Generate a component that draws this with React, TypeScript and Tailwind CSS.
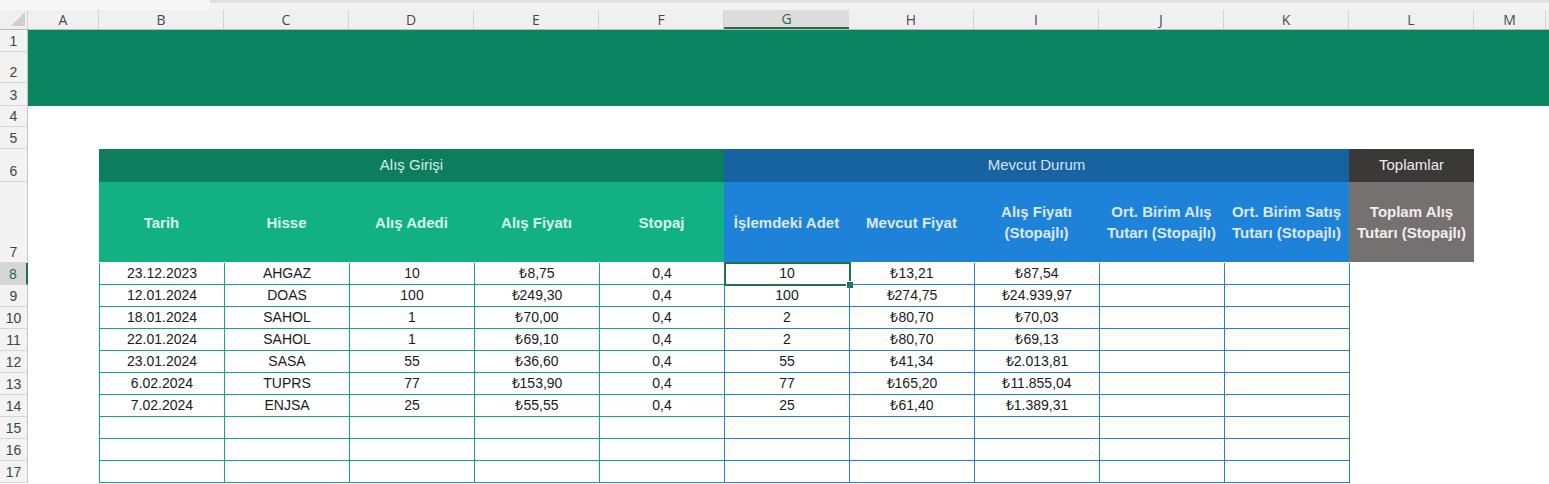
import React from "react";

const cols = ["B", "C", "D", "E", "F", "G", "H", "I", "J", "K", "L"];

const rows = [
  ["23.12.2023", "AHGAZ", "10", "₺8,75", "0,4", "10", "₺13,21", "₺87,54"],
  ["12.01.2024", "DOAS", "100", "₺249,30", "0,4", "100", "₺274,75", "₺24.939,97"],
  ["18.01.2024", "SAHOL", "1", "₺70,00", "0,4", "2", "₺80,70", "₺70,03"],
  ["22.01.2024", "SAHOL", "1", "₺69,10", "0,4", "2", "₺80,70", "₺69,13"],
  ["23.01.2024", "SASA", "55", "₺36,60", "0,4", "55", "₺41,34", "₺2.013,81"],
  ["6.02.2024", "TUPRS", "77", "₺153,90", "0,4", "77", "₺165,20", "₺11.855,04"],
  ["7.02.2024", "ENJSA", "25", "₺55,55", "0,4", "25", "₺61,40", "₺1.389,31"],
  ["", "", "", "", "", "", "", ""],
  ["", "", "", "", "", "", "", ""],
  ["", "", "", "", "", "", "", ""],
];

const greenHeads = ["Tarih", "Hisse", "Alış Adedi", "Alış Fiyatı", "Stopaj"];
const blueHeads = [
  ["İşlemdeki Adet"],
  ["Mevcut Fiyat"],
  ["Alış Fiyatı", "(Stopajlı)"],
  ["Ort. Birim Alış", "Tutarı (Stopajlı)"],
  ["Ort. Birim Satış", "Tutarı (Stopajlı)"],
];

const RowHead = ({ n, h, active }: { n: number; h: string; active?: boolean }) => (
  <div
    className={`w-[28px] shrink-0 flex items-end justify-center pb-[1px] border-b border-[#d6d6d6] text-[14px] leading-[18px] ${h} ${
      active
        ? "bg-[#d6d6d6] text-[#217346] border-r-2 border-r-[#217346]"
        : "bg-[#f3f3f3] text-[#444] border-r border-r-[#c4c4c4]"
    }`}
  >
    {n}
  </div>
);

export default function App() {
  return (
    <div className="w-[1549px] h-[484px] overflow-hidden bg-white font-['Liberation_Sans',sans-serif]">
      {/* top strip */}
      <div className="flex h-[10px]">
        <div className="w-[210px] bg-[#f7f7f7]" />
        <div className="flex-1 bg-[#f2f2f2] border-t-[3px] border-[#e0e0e0]" />
      </div>

      {/* column letters */}
      <div className="flex h-[20px] bg-[#f0f0f0] border-b border-[#b9b9b9] font-['Open_Sans',sans-serif] text-[14px] text-[#4a4a4a]">
        <div className="w-[28px] shrink-0 relative border-r border-[#d4d4d4]">
          <svg className="absolute left-[11px] top-[2px]" width="14" height="14" viewBox="0 0 14 14">
            <polygon points="0,14 14,0 14,14" fill="#cfcfcf" />
          </svg>
        </div>
        <div className="w-[71px] shrink-0 flex items-center justify-center border-r border-[#d4d4d4]">A</div>
        {cols.map((c) => (
          <div
            key={c}
            className={`w-[125px] shrink-0 flex items-center justify-center ${
              c === "G"
                ? "bg-[#dcdcdc] text-[#217346] border-b-2 border-[#217346]"
                : "border-r border-[#d4d4d4]"
            }`}
          >
            {c}
          </div>
        ))}
        <div className="w-[72px] shrink-0 flex items-center justify-center border-r border-[#d4d4d4]">M</div>
        <div className="flex-1" />
      </div>

      {/* green band rows 1-3 */}
      <div className="flex">
        <div className="flex flex-col">
          <RowHead n={1} h="h-[22px]" />
          <RowHead n={2} h="h-[31px]" />
          <RowHead n={3} h="h-[23px]" />
        </div>
        <div className="flex-1 bg-[#0b8462]" />
      </div>

      <div className="flex">
        <RowHead n={4} h="h-[21px]" />
      </div>
      <div className="flex">
        <RowHead n={5} h="h-[22px]" />
      </div>

      {/* table headers rows 6-7 */}
      <div className="flex">
        <div className="flex flex-col">
          <RowHead n={6} h="h-[33px]" />
          <RowHead n={7} h="h-[81px]" />
        </div>
        <div className="w-[71px] shrink-0" />
        <div className="flex flex-col">
          <div className="flex h-[33px] text-[15px]">
            <div className="w-[625px] flex items-center justify-center bg-[#0d7e5d] text-[#d4eee4]">Alış Girişi</div>
            <div className="w-[625px] flex items-center justify-center bg-[#1762a1] text-[#d3e4f4]">Mevcut Durum</div>
            <div className="w-[125px] flex items-center justify-center bg-[#3b3838] text-[#ececec]">Toplamlar</div>
          </div>
          <div className="flex h-[80px] text-[15px] font-bold leading-[21px] text-center">
            {greenHeads.map((t) => (
              <div key={t} className="w-[125px] flex items-center justify-center bg-[#12b184] text-[#d7f6e9]">
                {t}
              </div>
            ))}
            {blueHeads.map((t, i) => (
              <div key={i} className="w-[125px] flex flex-col items-center justify-center bg-[#1e83d8] text-[#dbe9f8] whitespace-nowrap">
                {t.map((l) => (
                  <span key={l}>{l}</span>
                ))}
              </div>
            ))}
            <div className="w-[125px] flex flex-col items-center justify-center bg-[#767171] text-[#f3eded] whitespace-nowrap">
              <span>Toplam Alış</span>
              <span>Tutarı (Stopajlı)</span>
            </div>
          </div>
        </div>
      </div>

      {/* data rows 8-17 */}
      {rows.map((r, ri) => (
        <div key={ri} className="flex h-[22px]">
          <RowHead n={ri + 8} h="h-[22px]" active={ri === 0} />
          <div className="w-[71px] shrink-0" />
          <div className="flex text-[14px] text-[#1a1a1a]">
            {r.slice(0, 5).map((v, ci) => (
              <div
                key={ci}
                className={`h-[22px] flex items-center justify-center border-b border-b-[#1ca57c] border-r ${
                  ci === 0 ? "w-[126px] border-l border-l-[#1ca57c]" : "w-[125px]"
                } ${ci === 4 ? "border-r-[#2a7ecd]" : "border-r-[#1ca57c]"}`}
              >
                {v}
              </div>
            ))}
            {[...r.slice(5), "", ""].map((v, ci) => (
              <div
                key={ci}
                className="relative w-[125px] h-[22px] flex items-center justify-center border-b border-r border-[#2a7ecd]"
              >
                {v}
                {ri === 0 && ci === 0 && (
                  <div className="absolute -left-[1px] -top-[1px] w-[127px] h-[24px] border-2 border-[#217346]">
                    <div className="absolute -right-[4px] -bottom-[4px] w-[6px] h-[6px] bg-[#217346] outline outline-1 outline-white" />
                  </div>
                )}
              </div>
            ))}
          </div>
        </div>
      ))}
    </div>
  );
}
